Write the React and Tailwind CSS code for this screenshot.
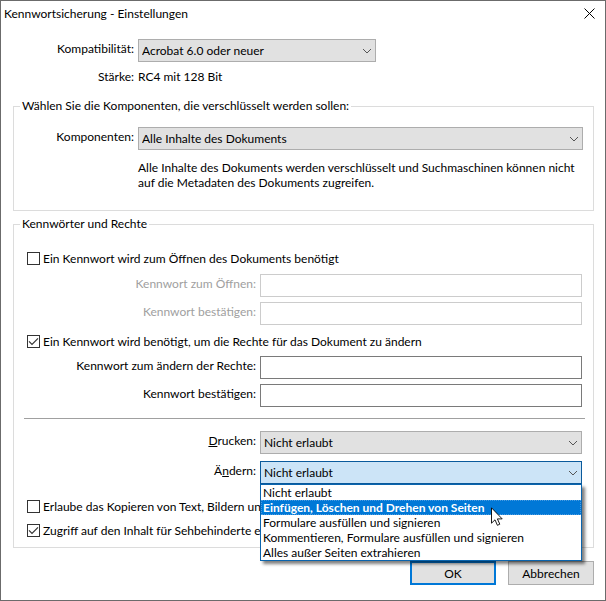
import { useState } from "react";

const PERMISSIONS = [
  "Nicht erlaubt",
  "Einfügen, Löschen und Drehen von Seiten",
  "Formulare ausfüllen und signieren",
  "Kommentieren, Formulare ausfüllen und signieren",
  "Alles außer Seiten extrahieren",
];

function Chevron() {
  return (
    <svg
      className="pointer-events-none absolute top-2 right-1 h-2 w-[10px]"
      viewBox="0 0 10 8"
      fill="none"
      stroke="#555555"
      strokeWidth="1"
      aria-hidden="true"
    >
      <path d="M1 2 L5 6 L9 2" />
    </svg>
  );
}

function Select({ id, options, active, children }) {
  return (
    <div className="relative">
      <select
        id={id}
        className={
          active
            ? "block h-[23px] w-full appearance-none border border-[#0a5a9c] bg-[#cce4f7] pl-[3px] text-black outline-none"
            : "block h-[23px] w-full appearance-none border border-[#adadad] bg-[#e1e1e1] pl-[3px] text-black outline-none"
        }
      >
        {options.map((option) => (
          <option key={option}>{option}</option>
        ))}
      </select>
      <Chevron />
      {children}
    </div>
  );
}

function CheckRow({ label, defaultChecked }) {
  return (
    <label className="flex h-[15px] items-center gap-[3px] px-[3px] whitespace-nowrap">
      <span className="relative flex h-[13px] w-[13px] shrink-0">
        <input
          type="checkbox"
          defaultChecked={defaultChecked}
          className="peer h-[13px] w-[13px] appearance-none border border-[#333333] bg-white"
        />
        <svg
          className="pointer-events-none absolute inset-0 hidden h-[13px] w-[13px] peer-checked:block"
          viewBox="0 0 13 13"
          fill="none"
          stroke="#333333"
          strokeWidth="1.2"
          aria-hidden="true"
        >
          <path d="M2 6.3 L5 9.3 L11 3.3" />
        </svg>
      </span>
      {label}
    </label>
  );
}

function PasswordRow({ id, label, disabled }) {
  return (
    <div className="grid grid-cols-[229px_1fr] gap-1 px-[3px]">
      <label
        htmlFor={id}
        className={disabled ? "text-right leading-5 text-[#a0a0a0]" : "text-right leading-5"}
      >
        {label}
      </label>
      <input
        id={id}
        type="password"
        disabled={disabled}
        className="h-[23px] w-full border border-[#7a7a7a] bg-white px-1 outline-none disabled:border-[#cccccc]"
      />
    </div>
  );
}

function Cursor() {
  return (
    <svg
      className="pointer-events-none absolute top-[46px] left-[231px] z-20 h-[19px] w-3"
      viewBox="0 0 12 19"
      aria-hidden="true"
    >
      <path
        d="M0.5 0.8 V16.2 L4 12.8 L6.4 18.3 L8.8 17.2 L6.4 11.9 H11.2 Z"
        fill="white"
        stroke="black"
        strokeWidth="0.9"
      />
    </svg>
  );
}

export default function App() {
  const [highlighted, setHighlighted] = useState(1);

  return (
    <div className="min-h-screen border border-[#6b6b6b] bg-white pr-[11px] pb-[15px] pl-3 font-['Lato','Noto_Sans',sans-serif] text-[12px] leading-[15px] text-black">
      <header className="-mr-px -ml-[9px] flex h-6 items-center justify-between">
        <h1>Kennwortsicherung - Einstellungen</h1>
        <button type="button" aria-label="Schließen">
          <svg
            className="h-[11px] w-[11px]"
            viewBox="0 0 11 11"
            stroke="black"
            strokeWidth="1"
            aria-hidden="true"
          >
            <path d="M0.5 0.5 L10.5 10.5 M10.5 0.5 L0.5 10.5" />
          </svg>
        </button>
      </header>

      <form>
        <div className="mt-[14px] grid grid-cols-[121px_238px] gap-x-1 gap-y-[7px]">
          <label htmlFor="compat" className="text-right leading-5">
            Kompatibilität:
          </label>
          <Select id="compat" options={["Acrobat 6.0 oder neuer"]} />
          <span className="text-right leading-4">Stärke:</span>
          <span className="leading-4">RC4 mit 128 Bit</span>
        </div>

        <fieldset className="mt-[13px] min-w-0 border border-[#dcdcdc] px-[10px] pb-5">
          <legend className="-ml-1 px-[2px] leading-4">
            Wählen Sie die Komponenten, die verschlüsselt werden sollen:
          </legend>
          <div className="grid grid-cols-[110px_1fr] gap-x-1 gap-y-[10px] pt-[13px]">
            <label htmlFor="components" className="text-right leading-5">
              Komponenten:
            </label>
            <Select id="components" options={["Alle Inhalte des Dokuments"]} />
            <p className="col-start-2">
              Alle Inhalte des Dokuments werden verschlüsselt und Suchmaschinen können nicht auf die
              Metadaten des Dokuments zugreifen.
            </p>
          </div>
        </fieldset>

        <fieldset className="mt-[5px] min-w-0 border border-[#dcdcdc] pt-[19px] pr-2 pb-[9px] pl-[10px]">
          <legend className="-ml-1 px-[2px] leading-4">Kennwörter und Rechte</legend>

          <CheckRow label="Ein Kennwort wird zum Öffnen des Dokuments benötigt" />
          <div className="mt-2 mb-[9px] flex flex-col gap-[5px]">
            <PasswordRow id="open-pw" label="Kennwort zum Öffnen:" disabled />
            <PasswordRow id="open-pw2" label="Kennwort bestätigen:" disabled />
          </div>

          <CheckRow
            label="Ein Kennwort wird benötigt, um die Rechte für das Dokument zu ändern"
            defaultChecked
          />
          <div className="mt-[7px] flex flex-col gap-[5px]">
            <PasswordRow id="rights-pw" label="Kennwort zum ändern der Rechte:" />
            <PasswordRow id="rights-pw2" label="Kennwort bestätigen:" />
          </div>

          <hr className="mt-[11px] mb-3 border-t border-[#a0a0a0]" />

          <div className="grid grid-cols-[229px_1fr] gap-x-1 gap-y-[7px] px-[3px]">
            <label htmlFor="print" className="text-right leading-5">
              <u>D</u>rucken:
            </label>
            <Select id="print" options={["Nicht erlaubt"]} />
            <label htmlFor="change" className="text-right leading-5">
              Ä<u>n</u>dern:
            </label>
            <Select id="change" options={PERMISSIONS} active>
              <ul
                role="listbox"
                aria-label="Ändern"
                className="absolute top-full left-0 z-10 w-full border border-[#0a64ad] bg-white shadow-[3px_3px_3px_rgba(0,0,0,0.5)]"
              >
                {PERMISSIONS.map((item, i) => (
                  <li
                    key={item}
                    role="option"
                    aria-selected={i === highlighted}
                    onMouseEnter={() => setHighlighted(i)}
                    className={
                      i === highlighted
                        ? "h-[15px] bg-[#0078d7] pl-[2px] font-bold whitespace-nowrap text-white outline outline-dotted -outline-offset-1 outline-[#4a9be0]"
                        : "h-[15px] pl-[2px] whitespace-nowrap"
                    }
                  >
                    {item}
                  </li>
                ))}
              </ul>
              <Cursor />
            </Select>
          </div>

          <div className="mt-[15px] flex flex-col gap-[9px]">
            <CheckRow label="Erlaube das Kopieren von Text, Bildern un" />
            <CheckRow label="Zugriff auf den Inhalt für Sehbehinderte e" defaultChecked />
          </div>
        </fieldset>

        <div className="mt-[13px] flex justify-end gap-3">
          <button type="button" className="h-6 w-[86px] border-2 border-[#0078d7] bg-[#e1e1e1]">
            OK
          </button>
          <button type="button" className="h-6 w-[86px] border border-[#adadad] bg-[#e1e1e1]">
            Abbrechen
          </button>
        </div>
      </form>
    </div>
  );
}
